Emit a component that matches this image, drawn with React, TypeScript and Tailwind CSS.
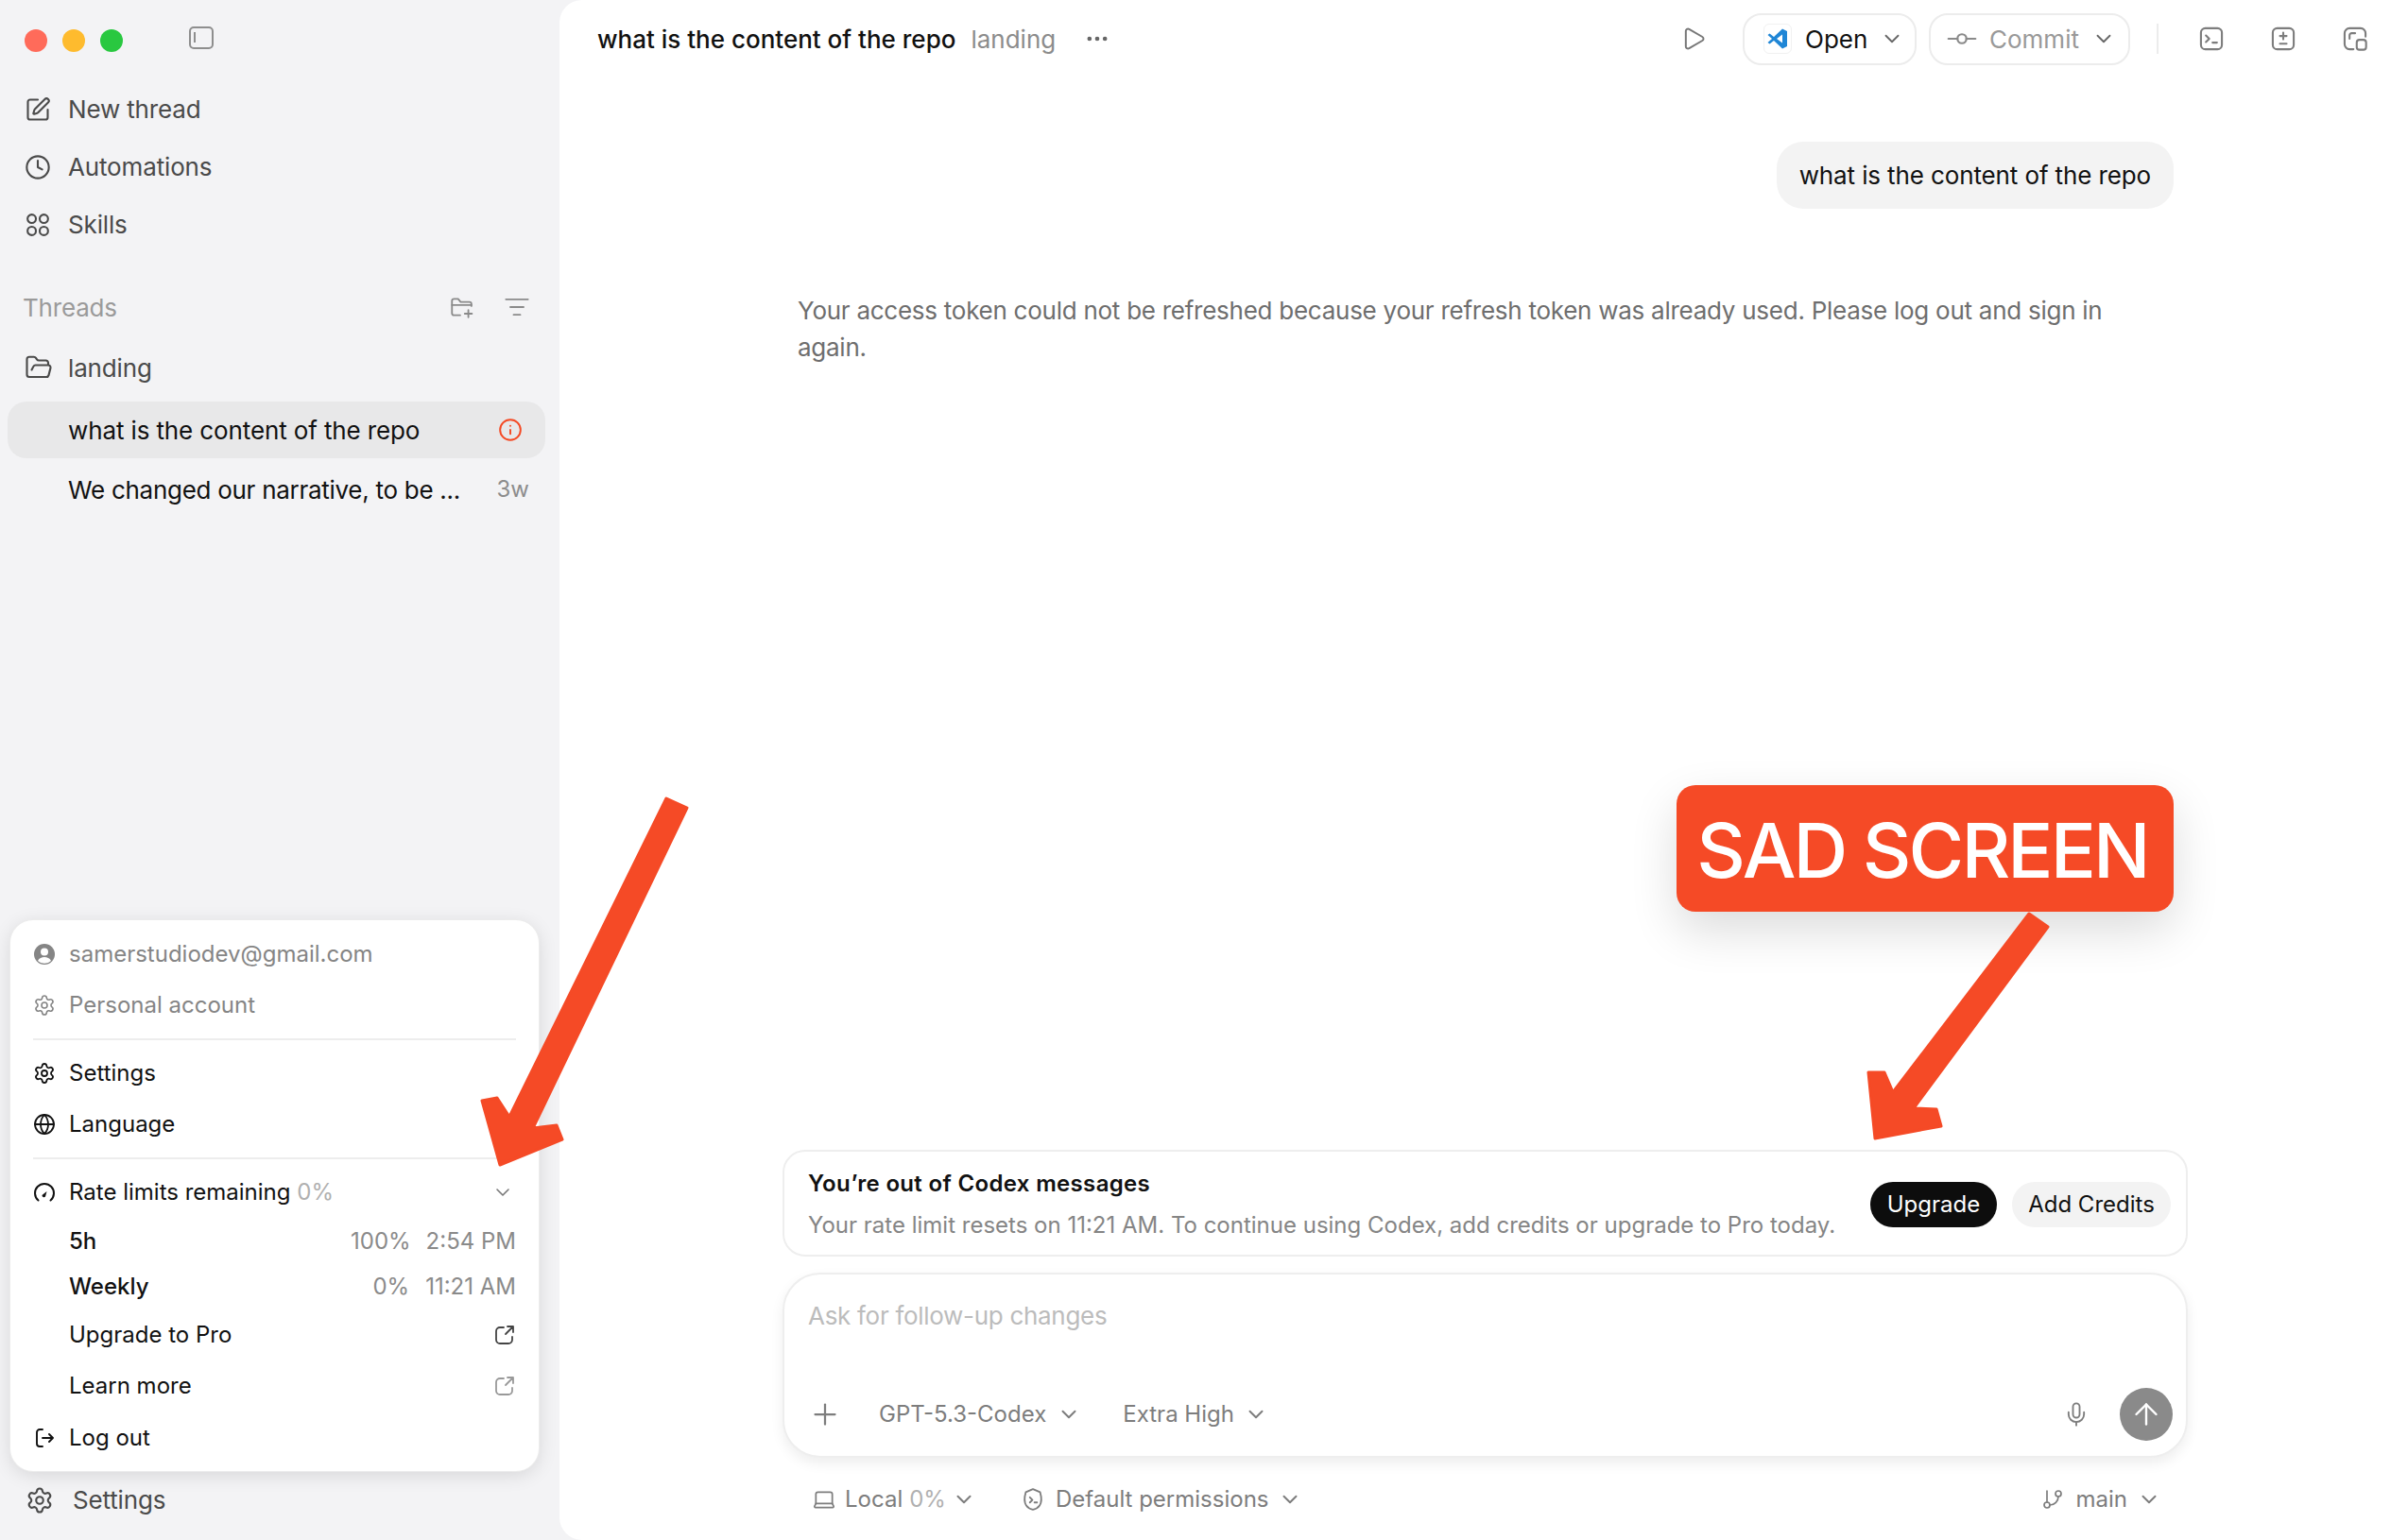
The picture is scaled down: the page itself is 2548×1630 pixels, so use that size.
import React from 'react';
import {
  ArrowUp,
  ChevronDown,
  Clock,
  Ellipsis,
  FolderOpen,
  GitBranch,
  GitCommitHorizontal,
  Globe,
  Info,
  Laptop,
  ListFilter,
  Mic,
  Play,
  Plus,
  Settings,
  SquarePen,
} from 'lucide-react';

const FONT = "font-['Inter','Noto_Sans',sans-serif]";

const Svg: React.FC<{ size: number; className?: string; sw?: number; children: React.ReactNode }> = ({
  size,
  className,
  sw = 2,
  children,
}) => (
  <svg
    width={size}
    height={size}
    viewBox="0 0 24 24"
    fill="none"
    stroke="currentColor"
    strokeWidth={sw}
    strokeLinecap="round"
    strokeLinejoin="round"
    className={className}
  >
    {children}
  </svg>
);

const SkillsIcon = () => (
  <Svg size={28} sw={1.8}>
    <circle cx="6.500" cy="6.500" r="3.800" />
    <circle cx="17.500" cy="6.500" r="3.800" />
    <circle cx="6.500" cy="17.500" r="3.800" />
    <circle cx="17.500" cy="17.500" r="3.800" />
  </Svg>
);

const NewFolderIcon = () => (
  <Svg size={26} sw={1.7}>
    <path d="M11 20H5a2 2 0 0 1-2-2V6a2 2 0 0 1 2-2h4l2.5 3H20a2 2 0 0 1 2 2v2" />
    <path d="M3 10h19" />
    <path d="M19 15v7M15.5 18.5h7" />
  </Svg>
);

const ExternalIcon: React.FC<{ className?: string }> = ({ className }) => (
  <Svg size={24} sw={1.8} className={className}>
    <path d="M11 4H7a4 4 0 0 0-4 4v9a4 4 0 0 0 4 4h9a4 4 0 0 0 4-4v-3" />
    <path d="M13 11l8-8M15 3h6v6" />
  </Svg>
);

const GaugeIcon = () => (
  <Svg size={24} sw={2}>
    <path d="M5.5 20.5a10 10 0 1 1 13 0" />
    <path d="M9.5 15l5-4-1.5 5.5a2 2 0 0 1-3.5-1.5z" fill="currentColor" stroke="none" />
  </Svg>
);

const LogOutIcon = () => (
  <Svg size={24} sw={1.9}>
    <path d="M10 3H7a3 3 0 0 0-3 3v12a3 3 0 0 0 3 3h3" />
    <path d="M10 12h11M17 8l4 4-4 4" />
  </Svg>
);

const UserFilledIcon = () => (
  <svg width={24} height={24} viewBox="0 0 24 24" className="text-[#858585]">
    <circle cx="12" cy="12" r="11" fill="currentColor" />
    <circle cx="12" cy="9.5" r="4" fill="white" />
    <path d="M5 19c1.5-3 4-4 7-4s5.500 1 7 4a10 10 0 0 1-14 0z" fill="white" />
  </svg>
);

const TerminalIcon = () => (
  <Svg size={28} sw={1.8}>
    <rect x="2.500" y="2.500" width="19" height="19" rx="4" />
    <path d="M7 9l3 3-3 3M13 15.500h4" />
  </Svg>
);

const DiffIcon = () => (
  <Svg size={28} sw={1.8}>
    <rect x="2.500" y="2.500" width="19" height="19" rx="4" />
    <path d="M12 6.500v6M9 9.500h6M9 16.500h6" />
  </Svg>
);

const PanelCopyIcon = () => (
  <Svg size={28} sw={1.8}>
    <path d="M10.500 21.500H7a4.500 4.500 0 0 1-4.500-4.500V7A4.500 4.500 0 0 1 7 2.500h10A4.500 4.500 0 0 1 21.500 7v3" />
    <path d="M7 12V9a2 2 0 0 1 2-2h3" />
    <rect x="13.500" y="13" width="8.500" height="9" rx="2.500" />
  </Svg>
);

const ShieldTermIcon = () => (
  <Svg size={26} sw={1.7}>
    <path d="M12 2l7 3c1.500 5 1.500 10-.5 13-1.500 2.200-4 3.500-6.500 4-2.500-.5-5-1.800-6.500-4C3.500 15 3.500 10 5 5z" />
    <path d="M9 10l2.500 2.500L9 15M13.500 15H16" />
  </Svg>
);

const VsCodeIcon = () => (
  <span className="flex h-[32px] w-[30px] items-center justify-center rounded-[6px] border border-[#f1f1f1] bg-white">
    <svg width={24} height={24} viewBox="0 0 24 24">
      <path d="M17 1.500l5 2.500v16l-5 2.500L8 14l-4.500 3.500L1.500 16l4.500-4-4.500-4 2-1.500L8 10z" fill="#1f86d6" />
      <path d="M17 7.500L11 12l6 4.500z" fill="white" />
    </svg>
  </span>
);

const NavItem: React.FC<{ icon: React.ReactNode; label: string }> = ({ icon, label }) => (
  <div className="flex h-[61px] items-center">
    <span className="flex w-[46px] shrink-0 text-[#4a4a4a]">{icon}</span>
    <span className="text-[26px] tracking-[-0.15px] text-[#4a4a4a]">{label}</span>
  </div>
);

const MenuRow: React.FC<{ icon?: React.ReactNode; label: React.ReactNode; right?: React.ReactNode; h: string; muted?: boolean }> = ({
  icon,
  label,
  right,
  h,
  muted,
}) => (
  <div className={`flex items-center ${h} ${muted ? 'text-[#858585]' : 'text-[#111111]'}`}>
    <span className="flex w-[38px] shrink-0">{icon}</span>
    <span className="flex-1 text-[24px]">{label}</span>
    {right}
  </div>
);

export default function App() {
  return (
    <div className={`relative flex h-[1630px] w-[2548px] overflow-hidden bg-[#f3f3f5] ${FONT}`}>
      <aside className="flex h-full w-[592px] shrink-0 flex-col">
        <div className="flex h-[85px] items-center pl-[26px]">
          <span className="h-[24px] w-[24px] rounded-full bg-[#ff6b5a]" />
          <span className="ml-[16px] h-[24px] w-[24px] rounded-full bg-[#febb2e]" />
          <span className="ml-[16px] h-[24px] w-[24px] rounded-full bg-[#29c840]" />
          <span className="mb-[6px] ml-[70px] flex h-[24px] w-[26px] items-center rounded-[5px] border-2 border-[#8e8e8e] pl-[3px]">
            <span className="h-[11px] w-[2px] bg-[#8e8e8e]" />
          </span>
        </div>

        <nav className="pl-[26px]">
          <NavItem icon={<SquarePen size={28} strokeWidth={1.8} />} label="New thread" />
          <NavItem icon={<Clock size={28} strokeWidth={1.8} />} label="Automations" />
          <NavItem icon={<SkillsIcon />} label="Skills" />
        </nav>

        <div className="mt-[26px] flex h-[62px] items-center justify-between pr-[31px] pl-[24px] text-[#9a9a9a]">
          <span className="text-[26px] tracking-[-0.2px]">Threads</span>
          <span className="flex items-center gap-[32px] text-[#8a8a8a]">
            <NewFolderIcon />
            <ListFilter size={28} strokeWidth={1.6} />
          </span>
        </div>

        <div className="flex h-[66px] items-center pl-[26px] text-[#4a4a4a]">
          <FolderOpen size={30} strokeWidth={1.7} className="mr-[16px]" />
          <span className="text-[26px] tracking-[-0.15px]">landing</span>
        </div>

        <div className="mx-[8px] mt-[3px] flex h-[60px] w-[569px] items-center justify-between rounded-[20px] bg-[#e8e8e9] pr-[24px] pl-[64px] text-[#111111]">
          <span className="text-[26px] tracking-[-0.12px]">what is the content of the repo</span>
          <Info size={26} strokeWidth={1.8} className="text-[#f44a25]" />
        </div>
        <div className="flex h-[64px] items-center justify-between pt-[2px] pr-[32px] pl-[72px] text-[#111111]">
          <span className="text-[26px] tracking-[-0.28px]">We changed our narrative, to be ...</span>
          <span className="text-[24px] text-[#8c8c8c]">3w</span>
        </div>

        <div className="mt-auto ml-[11px] w-[559px] rounded-[24px] bg-white px-[24px] pt-[9px] pb-[8px] shadow-[0_4px_20px_rgba(0,0,0,0.12)] ring-1 ring-[#ececec]">
          <MenuRow muted h="h-[54px]" icon={<UserFilledIcon />} label="samerstudiodev@gmail.com" />
          <MenuRow muted h="h-[54px]" icon={<Settings size={24} strokeWidth={1.6} />} label="Personal account" />
          <div className="my-[8px] h-[2px] bg-[#ededed]" />
          <MenuRow h="h-[54px]" icon={<Settings size={24} strokeWidth={1.8} />} label="Settings" />
          <MenuRow h="h-[54px]" icon={<Globe size={24} strokeWidth={1.8} />} label="Language" />
          <div className="mt-[8px] mb-[7px] h-[2px] bg-[#ededed]" />
          <MenuRow
            h="h-[56px]"
            icon={<GaugeIcon />}
            label={
              <>
                Rate limits remaining <span className="text-[#b0b0b0]">0%</span>
              </>
            }
            right={<ChevronDown size={24} strokeWidth={1.6} className="mr-[2px] text-[#777777]" />}
          />
          <MenuRow
            h="h-[48px]"
            label={<span className="font-medium">5h</span>}
            right={
              <span className="flex gap-[16px] text-[24px] text-[#8a8a8a]">
                <span>100%</span>
                <span>2:54 PM</span>
              </span>
            }
          />
          <MenuRow
            h="h-[48px]"
            label={<span className="font-medium">Weekly</span>}
            right={
              <span className="flex gap-[17px] text-[24px] text-[#8a8a8a]">
                <span>0%</span>
                <span>11:21 AM</span>
              </span>
            }
          />
          <MenuRow h="h-[54px]" label="Upgrade to Pro" right={<ExternalIcon className="text-[#444444]" />} />
          <MenuRow h="h-[54px]" label="Learn more" right={<ExternalIcon className="text-[#999999]" />} />
          <div className="mt-[1px]">
            <MenuRow h="h-[54px]" icon={<LogOutIcon />} label="Log out" />
          </div>
        </div>
        <div className="flex h-[73px] items-center pb-[12px] pl-[27px] text-[#4a4a4a]">
          <Settings size={30} strokeWidth={1.7} className="mr-[20px]" />
          <span className="text-[26px] tracking-[-0.15px]">Settings</span>
        </div>
      </aside>

      <main className="relative flex h-full flex-1 flex-col rounded-l-[24px] bg-white">
        <header className="flex h-[82px] shrink-0 items-center pr-[42px] pl-[40px]">
          <span className="text-[26px] font-medium text-[#111111]">what is the content of the repo</span>
          <span className="ml-[16px] text-[26px] text-[#8c8c8c]">landing</span>
          <Ellipsis size={28} className="ml-[30px] text-[#666666]" />
          <div className="ml-auto flex items-center">
            <Play size={28} strokeWidth={1.7} className="mr-[38px] text-[#777777]" />
            <div className="flex h-[55px] w-[184px] items-center rounded-[20px] border-2 border-[#ececec] pl-[20px] text-[26px] text-[#111111]">
              <VsCodeIcon />
              <span className="ml-[14px]">Open</span>
              <ChevronDown size={26} strokeWidth={1.7} className="ml-auto mr-[11px] text-[#666666]" />
            </div>
            <div className="ml-[13px] flex h-[55px] w-[213px] items-center rounded-[20px] border-2 border-[#ececec] pl-[14px] text-[26px] text-[#999999]">
              <GitCommitHorizontal size={38} strokeWidth={1.4} className="text-[#8a8a8a]" />
              <span className="ml-[10px]">Commit</span>
              <ChevronDown size={26} strokeWidth={1.7} className="ml-auto mr-[13px] text-[#666666]" />
            </div>
            <span className="mr-[42px] ml-[28px] h-[32px] w-[2px] bg-[#ececec]" />
            <span className="flex items-center gap-[48px] text-[#7d7d7d]">
              <TerminalIcon />
              <DiffIcon />
              <PanelCopyIcon />
            </span>
          </div>
        </header>

        <div className="flex flex-1 flex-col pr-[233px] pl-[236px]">
          <div className="mt-[68px] mr-[15px] self-end rounded-[28px] bg-[#f3f3f3] px-[24px] py-[17px] text-[26px] leading-[37px] tracking-[-0.12px] text-[#111111]">
            what is the content of the repo
          </div>
          <p className="mt-[88px] ml-[16px] w-[1400px] text-[26px] leading-[39px] tracking-[-0.26px] text-[#6e6e6e]">
            Your access token could not be refreshed because your refresh token was already used. Please log out and sign in again.
          </p>

          <div className="mt-auto flex h-[113px] items-center justify-between rounded-[24px] border-2 border-[#eeeeee] pt-[2px] pr-[16px] pl-[25px]">
            <div>
              <div className="text-[24px] leading-[34px] font-semibold tracking-[0.33px] text-[#111111]">You’re out of Codex messages</div>
              <div className="mt-[10px] text-[24px] leading-[34px] text-[#858585]">
                Your rate limit resets on 11:21 AM. To continue using Codex, add credits or upgrade to Pro today.
              </div>
            </div>
            <div className="flex items-center gap-[16px] text-[24px]">
              <span className="flex h-[48px] w-[134px] items-center justify-center rounded-full bg-[#0d0d0d] text-white">Upgrade</span>
              <span className="flex h-[48px] w-[168px] items-center justify-center rounded-full bg-[#f3f3f3] text-[#111111]">Add Credits</span>
            </div>
          </div>

          <div className="mt-[17px] flex h-[196px] flex-col rounded-[40px] border-2 border-[#eeeeee] bg-white pr-[14px] pl-[25px] shadow-[0_6px_14px_rgba(0,0,0,0.07)]">
            <div className="pt-[26px] text-[26px] leading-[36px] tracking-[-0.3px] text-[#bcbcbc]">Ask for follow-up changes</div>
            <div className="mt-auto mb-[16px] flex h-[56px] items-center text-[24px] text-[#7d7d7d]">
              <Plus size={36} strokeWidth={1.5} />
              <span className="ml-[39px]">GPT-5.3-Codex</span>
              <ChevronDown size={26} strokeWidth={1.8} className="ml-[11px]" />
              <span className="ml-[44px]">Extra High</span>
              <ChevronDown size={26} strokeWidth={1.8} className="ml-[10px]" />
              <Mic size={28} strokeWidth={1.6} className="mr-[32px] ml-auto" />
              <span className="flex h-[56px] w-[56px] items-center justify-center rounded-full bg-[#8a8a8a] text-white">
                <ArrowUp size={36} strokeWidth={1.6} />
              </span>
            </div>
          </div>

          <div className="flex h-[87px] shrink-0 items-center pr-[28px] pl-[31px] text-[24px] text-[#7d7d7d]">
            <Laptop size={26} strokeWidth={1.6} />
            <span className="ml-[9px]">Local</span>
            <span className="ml-[7px] text-[#b0b0b0]">0%</span>
            <ChevronDown size={26} strokeWidth={1.8} className="ml-[6px]" />
            <span className="ml-[47px]">
              <ShieldTermIcon />
            </span>
            <span className="ml-[11px]">Default permissions</span>
            <ChevronDown size={26} strokeWidth={1.8} className="ml-[9px]" />
            <GitBranch size={24} strokeWidth={1.7} className="ml-auto" />
            <span className="ml-[13px]">main</span>
            <ChevronDown size={26} strokeWidth={1.8} className="ml-[10px]" />
          </div>
        </div>

        <div className="absolute top-[831px] left-[1182px] flex h-[134px] w-[526px] items-center justify-center rounded-[20px] bg-[#f54a26] pt-[3px] pr-[6px] text-[80px] font-medium tracking-[-2.9px] text-white shadow-[0_20px_50px_rgba(0,0,0,0.14)]">
          SAD SCREEN
        </div>
      </main>

      <svg className="pointer-events-none absolute top-0 left-0" width={2548} height={1630} viewBox="0 0 2548 1630">
        <polygon
          points="705,845 727,855 564,1194 589,1191 595,1206 529,1233 510,1165 526,1162 539,1182"
          fill="#f54a26"
          stroke="#f54a26"
          strokeWidth={3}
          strokeLinejoin="round"
        />
        <polygon
          points="2147,967 2167,981 2025,1173 2049,1174 2054,1192 1984,1205 1977,1135 1994,1135 2003,1156"
          fill="#f54a26"
          stroke="#f54a26"
          strokeWidth={3}
          strokeLinejoin="round"
        />
      </svg>
    </div>
  );
}
